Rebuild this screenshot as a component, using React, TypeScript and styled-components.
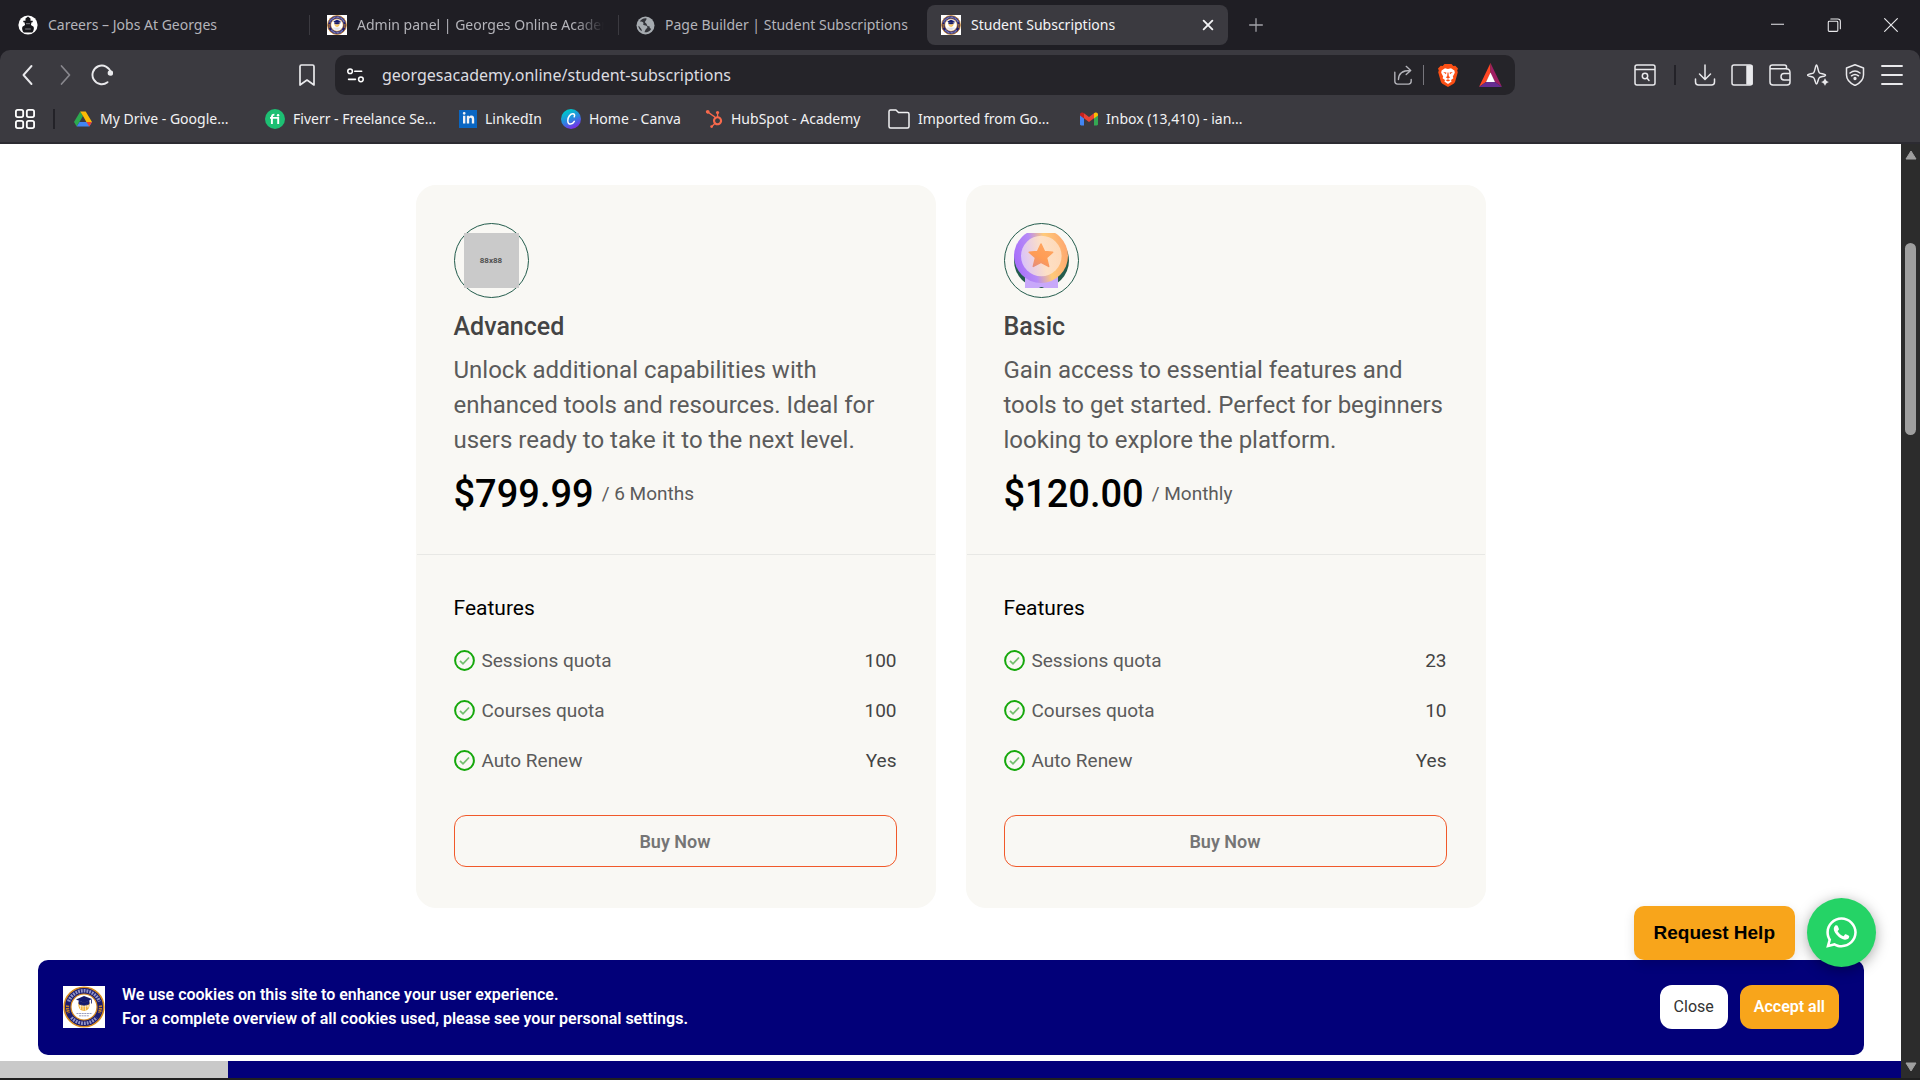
import React from 'react';
import styled, { createGlobalStyle } from 'styled-components';
import { FaHubspot, FaWhatsapp, FaLinkedinIn } from 'react-icons/fa6';

const ui = '"Noto Sans", "Open Sans", sans-serif';
const web = 'Roboto, "Liberation Sans", sans-serif';

const GlobalStyle = createGlobalStyle`
  * { box-sizing: border-box; }
  html, body, #root { height: 100%; }
  body { margin: 0; background: #202020; overflow: hidden; }
  button, input { font: inherit; color: inherit; border: 0; padding: 0; background: none; margin: 0; }
  h2, h3, p, ul, dl, dd { margin: 0; padding: 0; }
  svg { display: block; flex: none; }
`;

const Shell = styled.div`
  height: 100%;
  display: flex;
  flex-direction: column;
  padding-bottom: 2px;
`;

/* ---------- browser chrome ---------- */
const Chrome = styled.header`
  flex: none;
  background: #1f1e24;
  color: #fff;
  font: 14px/20px ${ui};
  border-bottom: 2px solid #2c2b31;
`;

const TabStrip = styled.div`
  display: flex;
  align-items: center;
  height: 50px;
  padding: 5px 0 5px 1px;
`;

const Tab = styled.button<{ $active?: boolean }>`
  display: flex;
  align-items: center;
  gap: 10px;
  width: ${(p) => (p.$active ? 301 : 308)}px;
  height: 40px;
  padding: 0 14px;
  padding-left: ${(p) => (p.$active ? 14 : 17)}px;
  border-radius: 8px;
  background: ${(p) => (p.$active ? '#3b3a40' : 'transparent')};
  color: ${(p) => (p.$active ? '#f4f4f6' : '#b4b4ba')};
  white-space: nowrap;
  text-align: left;
`;

const TabTitle = styled.span<{ $fade?: boolean }>`
  flex: 1;
  min-width: 0;
  overflow: hidden;
  ${(p) => p.$fade && 'mask-image: linear-gradient(to right, #000 88%, transparent);'}
`;

const Divider = styled.span<{ $tone: string; $w?: number }>`
  flex: none;
  width: ${(p) => p.$w ?? 1}px;
  height: 20px;
  background: ${(p) => p.$tone};
`;

const IconButton = styled.button<{ $w?: number; $tone?: string }>`
  display: flex;
  align-items: center;
  justify-content: center;
  flex: none;
  width: ${(p) => p.$w ?? 37}px;
  height: 36px;
  color: ${(p) => p.$tone ?? '#e9e9ec'};
`;

const Spacer = styled.span`
  flex: 1;
`;

const Panel = styled.div`
  background: #3b3a40;
  border-radius: 10px 10px 0 0;
  padding-top: 5px;
`;

const Toolbar = styled.div`
  display: flex;
  align-items: center;
  height: 40px;
  padding: 0 10px 0 9px;
`;

const NavGroup = styled.div`
  display: flex;
  flex: none;
  width: 279px;
`;

const AddressBar = styled.label`
  display: flex;
  align-items: center;
  flex: 0 1 1180px;
  height: 40px;
  margin-left: 10px;
  padding: 0 6px 0 12px;
  border-radius: 10px;
  background: #252429;
  font-size: 16px;
`;

const AddressField = styled.div`
  display: flex;
  flex: 1;
  margin-left: 18px;
`;

const Address = styled.input`
  width: 100%;
  outline: 0;
  color: #dcdce0;
`;

const Bookmarks = styled.nav`
  display: flex;
  align-items: center;
  height: 47px;
  padding-left: 15px;
`;

const Bookmark = styled.a<{ $w: number }>`
  display: flex;
  align-items: center;
  gap: 8px;
  width: ${(p) => p.$w}px;
  color: #f2f2f4;
  text-decoration: none;
  white-space: nowrap;
`;

const BookmarkLead = styled.div`
  display: flex;
  align-items: center;
  gap: 18px;
  width: 59px;
`;

const LinkedInTile = styled.span`
  display: grid;
  place-items: center;
  width: 18px;
  height: 18px;
  background: #0a66c2;
`;

/* ---------- page ---------- */
const Viewport = styled.div`
  flex: 1;
  min-height: 0;
  display: flex;
`;

const Page = styled.main`
  position: relative;
  flex: 1;
  min-width: 0;
  display: flex;
  flex-direction: column;
  background: #fff;
  font-family: ${web};
`;

const Plans = styled.section`
  flex: 1;
  display: flex;
  justify-content: center;
  align-items: flex-start;
  gap: 30px;
  padding-top: 41px;
`;

const Card = styled.article`
  width: 520px;
  border: 1px solid #f9f8f4;
  border-radius: 20px;
  background: #f9f8f4;
`;

const CardHead = styled.div`
  padding: 37px 38px 33px 37px;
  border-bottom: 1px solid #e8e8e5;
`;

const CardBody = styled.div`
  padding: 37px 38px 40px 37px;
`;

const Badge = styled.div`
  display: grid;
  place-items: center;
  width: 75px;
  height: 75px;
  border: 1px solid #235c4c;
  border-radius: 50%;
`;

const Placeholder = styled.span`
  display: grid;
  place-items: center;
  width: 55px;
  height: 55px;
  background: #cacaca;
  color: #505050;
  font: 700 8px/8px ${web};
`;

const PlanName = styled.h2`
  margin-top: 13px;
  color: #444;
  font-size: 25px;
  font-weight: 500;
  line-height: 32px;
`;

const Description = styled.p`
  margin-top: 10px;
  color: #5b5b5b;
  font-size: 24px;
  line-height: 35px;
`;

const PriceRow = styled.div`
  display: flex;
  align-items: center;
  gap: 8px;
  margin-top: 9px;
`;

const Price = styled.span`
  font-size: 38px;
  font-weight: 500;
  line-height: 54px;
  color: #000;
`;

const Period = styled.span`
  color: #5b5b5b;
  font-size: 19px;
  line-height: 28px;
`;

const FeaturesTitle = styled.h3`
  color: #000;
  font-size: 21px;
  font-weight: 400;
  line-height: 32px;
  margin-bottom: 11px;
`;

const FeatureList = styled.ul`
  list-style: none;
`;

const Feature = styled.li`
  display: flex;
  align-items: center;
  gap: 7px;
  height: 50px;
  color: #5b5b5b;
  font-size: 19px;
`;

const FeatureValue = styled.span`
  margin-left: auto;
  color: #444;
`;

const BuyButton = styled.button`
  width: 100%;
  height: 52px;
  margin-top: 30px;
  border: 1px solid #f1592a;
  border-radius: 12px;
  color: #757575;
  font-size: 18px;
  font-weight: 600;
`;

const FooterStrip = styled.div`
  display: flex;
  height: 17px;
  background: #020079;
`;

const LoadStatus = styled.span`
  width: 228px;
  background: #c9c9c9;
`;

const CookieBar = styled.aside`
  position: absolute;
  left: 38px;
  right: 37px;
  bottom: 23px;
  display: flex;
  align-items: center;
  gap: 12px;
  height: 95px;
  padding: 0 25px 2px;
  border-radius: 10px;
  background: #020079;
  color: #fff;
`;

const CookieText = styled.p`
  flex: 1;
  margin-left: 5px;
  font-size: 16px;
  font-weight: 600;
  line-height: 24px;
`;

const CookieButton = styled.button<{ $primary?: boolean }>`
  height: 44px;
  padding: 0 14px;
  border-radius: 12px;
  background: ${(p) => (p.$primary ? '#f8a51b' : '#fff')};
  color: ${(p) => (p.$primary ? '#fff' : '#333')};
  font-size: 16px;
  font-weight: ${(p) => (p.$primary ? 600 : 400)};
`;

const HelpDock = styled.div`
  position: absolute;
  right: 25px;
  bottom: 111px;
  display: flex;
  align-items: center;
  gap: 12px;
`;

const HelpButton = styled.button`
  height: 54px;
  padding: 0 20px;
  border-radius: 10px;
  background: #f8a51b;
  color: #000;
  font: 700 19px/24px "Liberation Sans", Arial, sans-serif;
  box-shadow: 0 4px 12px rgba(0, 0, 0, 0.12);
`;

const ChatButton = styled.button`
  display: grid;
  place-items: center;
  width: 69px;
  height: 69px;
  border-radius: 50%;
  background: #25d366;
  color: #fff;
  box-shadow: 0 3px 14px rgba(0, 0, 0, 0.35);
`;

const ScrollTrack = styled.div`
  display: flex;
  flex-direction: column;
  align-items: center;
  width: 19px;
  padding: 6px 0;
  background: #2c2c2c;
`;

const ScrollThumb = styled.div`
  width: 11px;
  height: 192px;
  margin-top: 83px;
  margin-bottom: auto;
  border-radius: 6px;
  background: #9f9f9f;
`;

/* ---------- drawings ---------- */
type LineProps = { size?: number; w?: number; children: React.ReactNode };
const Line = ({ size = 22, w = 1.5, children }: LineProps) => (
  <svg width={size} height={size} viewBox="0 0 22 22" fill="none" stroke="currentColor" strokeWidth={w} strokeLinecap="round" strokeLinejoin="round" aria-hidden="true">
    {children}
  </svg>
);

const Seal = ({ size }: { size: number }) => (
  <svg width={size} height={size} viewBox="0 0 42 42" aria-hidden="true">
    <rect width="42" height="42" fill="#fff" />
    <circle cx="21" cy="21" r="19.800" fill="#1b1c70" stroke="#d98a1c" strokeWidth="1.600" />
    <path d="M5.600 15.500a16.400 16.400 0 0 1 30.800 0M8.500 31.500a16.400 16.400 0 0 0 25 0" stroke="#b9bce4" strokeWidth="3.400" strokeDasharray="1.800 1" opacity=".75" fill="none" />
    <path d="M4.600 19.500a16.500 16.500 0 0 0 1 7.500M37.400 19.500a16.500 16.500 0 0 1-1 7.500" stroke="#c98224" strokeWidth="3.200" strokeDasharray="1.600 .7" fill="none" />
    <circle cx="21" cy="21" r="13" fill="#fff" stroke="#d98a1c" strokeWidth="1.200" />
    <path d="M15.500 16c-1 5 1.500 9 5.500 9s6.500-4 5.500-9z" fill="#f2b43c" />
    <path d="M17.500 17v6M20 17v7.500M22.500 17v7.500M25 17v5M16 20h10.500" stroke="#fff" strokeWidth=".6" />
    <path d="m13 13.500 8-3.500 8 3-7.500 4z" fill="#151a6d" />
    <path d="M16 15v3c3 1.500 7 1.500 10 0v-3.500l-4.500 2.500zM28.500 13.500v4" fill="#151a6d" stroke="#151a6d" strokeWidth=".8" />
    <path d="M13.500 27.500h15M16 29.800h10" stroke="#8f93b8" strokeWidth=".9" strokeDasharray="2 .6" />
  </svg>
);

const Crest = () => (
  <svg width="20" height="20" viewBox="0 0 20 20" aria-hidden="true">
    <circle cx="10" cy="10" r="9.600" fill="#fff" />
    <path d="M7.500 3.400 10 1.600l2.500 1.800v2.400h2.200v1.400H5.300V5.800h2.200z" fill="#17171b" />
    <path d="M6.400 7h7.200l-.7 3 2.700 1.800c.8 2-.2 4.700-1.400 5.600H5.800C4.600 16.500 3.600 13.800 4.400 11.800L7.100 10z" fill="#17171b" />
    <path d="M8 8.700h4M7.200 14h5.600" stroke="#8a8a90" strokeWidth=".9" />
  </svg>
);

const Globe = () => (
  <svg width="19" height="19" viewBox="0 0 19 19" aria-hidden="true">
    <circle cx="9.500" cy="9.500" r="9" fill="#a6abb0" />
    <path d="M10.500 2.200c-3-.4-5.500 1-6.700 3.300 1.800.1 3.200.2 3.600 1.300.4 1.200-.8 1.500.2 2.300 1 .7 2.800.2 3.600 1.300.6 1-.4 2-1.200 2.600-.8.700-.8 2-1.600 3.300 2.800.3 5.400-1.200 6.800-3.400-1.500-.6-1.700-1.800-1.700-2.600-1.400 0-2.700-.6-2.700-1.900 0-1.200-1.800-.9-1.800-2.300 0-1.500 1.700-1.500 1.500-3.900z" fill="#33343a" />
    <path d="M2.300 9.800c.2 2.300 1.600 4.300 3.400 5.500.2-1.300-.2-2-.8-2.700-.9-1-1.200-2.200-2.600-2.800z" fill="#33343a" />
  </svg>
);

const Drive = () => (
  <svg width="18" height="18" viewBox="0 0 18 18" aria-hidden="true">
    <path d="M6.200 1.500 0 12l2.700 4.600L9 6z" fill="#2da94f" />
    <path d="M6.200 1.500h5.500L18 12h-5.600L9 6z" fill="#fbbc05" />
    <path d="M2.700 16.600 5.500 12H18l-2.700 4.600z" fill="#4285f4" />
    <path d="M12.400 12H18l-2.700 4.600z" fill="#ea4335" />
  </svg>
);

const FiverrMark = () => (
  <svg width="20" height="20" viewBox="0 0 20 20" aria-hidden="true">
    <circle cx="10" cy="10" r="10" fill="#1dbf73" />
    <path d="M6.900 15V8c0-1.600.9-2.400 2.500-2.400M5 8.900h8.200V15" fill="none" stroke="#fff" strokeWidth="1.900" />
    <circle cx="13.100" cy="6.200" r="1.200" fill="#fff" />
  </svg>
);

const CanvaMark = () => (
  <svg width="20" height="20" viewBox="0 0 20 20" aria-hidden="true">
    <defs>
      <linearGradient id="canva" x1="0.300" y1="0.100" x2="0.700" y2="0.950">
        <stop offset="0" stopColor="#00c4cc" />
        <stop offset=".5" stopColor="#2b86e0" />
        <stop offset="1" stopColor="#7d2ae8" />
      </linearGradient>
    </defs>
    <circle cx="10" cy="10" r="10" fill="url(#canva)" />
    <path d="M13.200 7.800c.8-1.500.4-3-1.300-3C9 4.800 6.800 8.400 6.800 11.400c0 2.200 1 3.700 2.700 3.700 1.600 0 2.900-1 3.800-2.700" fill="none" stroke="#fff" strokeWidth="1.500" strokeLinecap="round" />
  </svg>
);

const GmailMark = () => (
  <svg width="18" height="18" viewBox="0 0 18 18" aria-hidden="true">
    <path d="M0 4.500v9.800c0 .7.500 1.200 1.200 1.200H4V8z" fill="#4285f4" />
    <path d="M18 4.500v9.800c0 .7-.5 1.200-1.200 1.200H14V8z" fill="#34a853" />
    <path d="M4 3.300v5L9 12l5-3.700v-5L9 7z" fill="#ea4335" />
    <path d="M0 4.500v1L4 8.400V3.300l-.8-.5C1.800 1.800 0 2.700 0 4.500z" fill="#c5221f" />
    <path d="M18 4.500v1l-4 2.900V3.300l.8-.5c1.400-1 3.200-.1 3.200 1.700z" fill="#fbbc04" />
  </svg>
);

const BraveMark = () => (
  <svg width="20" height="23" viewBox="0 0 20 23" aria-hidden="true">
    <path d="M6.500 0h7l1.800 2 2-.2L20 4.600l-.8 2 .6 1.700-2.600 9.200c-.3 1-.8 1.700-1.600 2.200L10 23l-5.600-3.300c-.8-.5-1.300-1.200-1.600-2.200L.2 8.300l.6-1.700-.8-2 2.700-2.800 2 .2z" fill="#fb4f14" />
    <path d="M10 5l3-.8 3.400 2.400.4 2.200-2 3.600.6 1.800-2.400 1.700.6 1.500L10 20l-3.600-2.600.6-1.500-2.400-1.700.6-1.800-2-3.600.4-2.200L7 4.200z" fill="#fff" />
    <path d="m5.200 8 3.200.5-.4 1.700zM14.800 8l-3.200.5.400 1.700zM9.500 8.500h1l.3 3.800 1.400 1-2.200 1.400-2.200-1.400 1.400-1zM7.600 16.300l2.400-1 2.400 1-2.400 1.300z" fill="#fb4f14" />
  </svg>
);

const Triangle = () => (
  <svg width="23" height="24" viewBox="0 0 23 24" aria-hidden="true">
    <path d="M11.500 0 0 24l7-5 4.500-8.500z" fill="#ff4724" />
    <path d="M11.500 0 23 24l-7-5-4.500-8.500z" fill="#9e1f63" />
    <path d="M0 24h23l-7-5H7z" fill="#662d91" />
    <path d="m11.500 9.500 4.500 9.500H7z" fill="#fff" />
  </svg>
);

const Medal = () => (
  <svg width="55" height="55" viewBox="0 0 55 55" aria-hidden="true">
    <defs>
      <linearGradient id="ring" x1="0" y1=".6" x2="1" y2=".4">
        <stop offset="0" stopColor="#a66dfb" />
        <stop offset=".35" stopColor="#b78cf6" />
        <stop offset=".62" stopColor="#ffcb7a" />
        <stop offset="1" stopColor="#fda66f" />
      </linearGradient>
      <linearGradient id="disc" x1="0" y1=".6" x2="1" y2=".4">
        <stop offset="0" stopColor="#d9c2fb" />
        <stop offset=".55" stopColor="#fde0c6" />
        <stop offset="1" stopColor="#fed9b8" />
      </linearGradient>
      <linearGradient id="star" x1="0" y1="1" x2=".6" y2="0">
        <stop offset="0" stopColor="#e08a85" />
        <stop offset=".5" stopColor="#ff9c55" />
        <stop offset="1" stopColor="#ffa45e" />
      </linearGradient>
    </defs>
    <circle cx="27.500" cy="27.500" r="27.500" fill="#235c4c" />
    <path d="M11 40h33v15H11z" fill="#c8a8fa" />
    <circle cx="27" cy="23" r="27" fill="url(#ring)" />
    <circle cx="27.300" cy="23" r="20.300" fill="url(#disc)" />
    <path d="m27 11 3.500 7.600 8.200.6-6.200 5.600 2.200 8.600L27 29.400l-7.700 4 2.200-8.600-6.300-5.600 8.300-.6z" fill="url(#star)" stroke="url(#star)" strokeWidth="1.500" strokeLinejoin="round" />
    <path d="M25 55q2.500-2 5 0z" fill="#235c4c" />
  </svg>
);

const Check = () => (
  <svg width="21" height="21" viewBox="0 0 21 21" fill="none" aria-hidden="true">
    <circle cx="10.500" cy="10.500" r="9.400" stroke="#16a80c" strokeWidth="2" />
    <path d="m6 10.800 3 3 6-6.300" stroke="#73bf6e" strokeWidth="1.800" />
  </svg>
);

type Plan = { name: string; text: string; price: string; period: string; art: React.ReactNode; features: [string, string][] };

const plans: Plan[] = [
  {
    name: 'Advanced',
    text: 'Unlock additional capabilities with enhanced tools and resources. Ideal for users ready to take it to the next level.',
    price: '$799.99',
    period: '/ 6 Months',
    art: <Placeholder>88x88</Placeholder>,
    features: [['Sessions quota', '100'], ['Courses quota', '100'], ['Auto Renew', 'Yes']],
  },
  {
    name: 'Basic',
    text: 'Gain access to essential features and tools to get started. Perfect for beginners looking to explore the platform.',
    price: '$120.00',
    period: '/ Monthly',
    art: <Medal />,
    features: [['Sessions quota', '23'], ['Courses quota', '10'], ['Auto Renew', 'Yes']],
  },
];

const PlanCard = ({ plan }: { plan: Plan }) => (
  <Card>
    <CardHead>
      <Badge>{plan.art}</Badge>
      <PlanName>{plan.name}</PlanName>
      <Description>{plan.text}</Description>
      <PriceRow>
        <Price>{plan.price}</Price>
        <Period>{plan.period}</Period>
      </PriceRow>
    </CardHead>
    <CardBody>
      <FeaturesTitle>Features</FeaturesTitle>
      <FeatureList>
        {plan.features.map(([label, value]) => (
          <Feature key={label}>
            <Check />
            <span>{label}</span>
            <FeatureValue>{value}</FeatureValue>
          </Feature>
        ))}
      </FeatureList>
      <BuyButton type="button">Buy Now</BuyButton>
    </CardBody>
  </Card>
);

const BrowserChrome = () => (
  <Chrome>
    <TabStrip>
      <Tab type="button"><Crest /><TabTitle>Careers – Jobs At Georges</TabTitle></Tab>
      <Divider $tone="#3b3a40" />
      <Tab type="button"><Seal size={20} /><TabTitle $fade>Admin panel | Georges Online Academy</TabTitle></Tab>
      <Divider $tone="#3b3a40" />
      <Tab type="button"><Globe /><TabTitle>Page Builder | Student Subscriptions</TabTitle></Tab>
      <Tab type="button" $active>
        <Seal size={20} />
        <TabTitle>Student Subscriptions</TabTitle>
        <Line size={12} w={3.4}><path d="m3 3 16 16M19 3 3 19" /></Line>
      </Tab>
      <IconButton aria-label="New tab" $w={55} $tone="#a2a2a8"><Line size={14} w={2}><path d="M11 1v20M1 11h20" /></Line></IconButton>
      <Spacer />
      <IconButton aria-label="Minimize" $w={56}><Line size={13} w={1.7}><path d="M0 9h22" /></Line></IconButton>
      <IconButton aria-label="Restore" $w={57}><Line size={14} w={1.7}><path d="M2 6.500q0-1.500 1.500-1.500h12q1.500 0 1.500 1.500v13q0 1.500-1.500 1.500h-12Q2 21 2 19.500zM6 1.500h11q4 0 4 4V17" /></Line></IconButton>
      <IconButton aria-label="Close window" $w={58}><Line size={14} w={1.8}><path d="m1 1 20 20M21 1 1 21" /></Line></IconButton>
    </TabStrip>
    <Panel>
      <Toolbar>
        <NavGroup>
          <IconButton aria-label="Back"><Line w={1.9}><path d="m14.500 2-8 9 8 9" /></Line></IconButton>
          <IconButton aria-label="Forward" $tone="#88878d"><Line w={1.700}><path d="m7.500 2 8 9-8 9" /></Line></IconButton>
          <IconButton aria-label="Reload">
            <Line w={1.9}><path d="M16.500 18.200A9.300 9.300 0 1 1 19.800 8.600" /><circle cx="19.400" cy="9" r="1.800" fill="currentColor" /></Line>
          </IconButton>
        </NavGroup>
        <IconButton aria-label="Bookmark this page"><Line w={1.700}><path d="M4 2.500Q4 1 5.500 1h11Q18 1 18 2.500V21l-7-5-7 5z" /></Line></IconButton>
        <AddressBar>
          <Line size={17} w={2}><circle cx="4" cy="5.500" r="3" /><path d="M10 5.500h9M2 16h9" /><circle cx="18" cy="16" r="3" /></Line>
          <AddressField><Address aria-label="Address" defaultValue="georgesacademy.online/student-subscriptions" /></AddressField>
          <IconButton aria-label="Share" $tone="#b4b4ba" $w={40}><Line size={20}><path d="M2 8v10q0 3 3 3h12q3 0 3-3v-2M6 16c0-6 3-10 13-10M14.500 1.500l5 4.500-5 4.500" /></Line></IconButton>
          <Divider $tone="#77767c" />
          <IconButton aria-label="Shields" $w={48}><BraveMark /></IconButton>
          <IconButton aria-label="Rewards"><Triangle /></IconButton>
        </AddressBar>
        <Spacer />
        <IconButton aria-label="Search tabs"><Line><path d="M1 3q0-2 2-2h16q2 0 2 2v16q0 2-2 2H3q-2 0-2-2zM1 5.500h20" /><circle cx="11" cy="12" r="2.700" /><path d="m13 14 2 2.500" /></Line></IconButton>
        <IconButton as="span" $w={23}><Divider $tone="#232228" $w={2} /></IconButton>
        <IconButton aria-label="Downloads"><Line><path d="M11 1v14M5.500 10l5.500 5.500 5.500-5.500M1.500 15v3q0 3 3 3h13q3 0 3-3v-3" /></Line></IconButton>
        <IconButton aria-label="Sidebar" $w={38}><Line><path d="M1 3q0-2 2-2h16q2 0 2 2v16q0 2-2 2H3q-2 0-2-2z" /><path d="M16 2h5v18h-5z" fill="currentColor" /></Line></IconButton>
        <IconButton aria-label="Wallet" $w={38}><Line><path d="M17.500 5V3q0-2-2-2H3.500Q1 1 1 3v15q0 3 3 3h14q3 0 3-3v-2M1 4.800h16q4 0 4 4M21 9.500h-6q-3 0-3 3.200t3 3.300h6z" /></Line></IconButton>
        <IconButton aria-label="Assistant"><Line><path d="M9.500 1c1.200 0 1.400 6.800 3 8 1.200.9 6 1 6 2.200s-4.800 1.300-6 2.300c-1.600 1.300-1.800 6.500-3 6.500s-1.400-5.200-3-6.500c-1.200-1-6-1.100-6-2.300s4.800-1.300 6-2.200c1.600-1.200 1.800-8 3-8z" /><path d="M18 14q.8 3 4 4-3.200 1-4 4-.8-3-4-4 3.200-1 4-4z" fill="currentColor" stroke="#3b3a40" strokeWidth="0.300" /></Line></IconButton>
        <IconButton aria-label="VPN"><Line><path d="M11 .8 19.500 4v7q0 6.500-8.500 10.500Q2.500 17.500 2.500 11V4zM6 9q5-4 10 0M7.500 11.800q3.500-2.800 7 0" /><circle cx="11" cy="14.500" r=".9" fill="currentColor" /></Line></IconButton>
        <IconButton aria-label="Menu"><Line w={1.900}><path d="M1 2h20M1 11h20M1 20h20" /></Line></IconButton>
      </Toolbar>
      <Bookmarks>
        <BookmarkLead>
          <Line size={20} w={2}><path d="M3 1h4q2 0 2 2v4q0 2-2 2H3q-2 0-2-2V3q0-2 2-2zM15 1h4q2 0 2 2v4q0 2-2 2h-4q-2 0-2-2V3q0-2 2-2zM3 13h4q2 0 2 2v4q0 2-2 2H3q-2 0-2-2v-4q0-2 2-2zM15 13h4q2 0 2 2v4q0 2-2 2h-4q-2 0-2-2v-4q0-2 2-2z" /></Line>
          <Divider $tone="#232228" $w={2} />
        </BookmarkLead>
        <Bookmark href="#" $w={191}><Drive />My Drive - Google...</Bookmark>
        <Bookmark href="#" $w={194}><FiverrMark />Fiverr - Freelance Se...</Bookmark>
        <Bookmark href="#" $w={102}><LinkedInTile><FaLinkedinIn size={13} /></LinkedInTile>LinkedIn</Bookmark>
        <Bookmark href="#" $w={144}><CanvaMark />Home - Canva</Bookmark>
        <Bookmark href="#" $w={183}><FaHubspot size={18} color="#f8694c" />HubSpot - Academy</Bookmark>
        <Bookmark href="#" $w={192}>
          <Line><path d="M1 3.500Q1 2 2.500 2H8l2.500 2.500h9Q21 4.500 21 6v12.500q0 1.500-1.500 1.500h-17Q1 20 1 18.500z" /></Line>
          Imported from Go...
        </Bookmark>
        <Bookmark href="#" $w={180}><GmailMark />Inbox (13,410) - ian...</Bookmark>
      </Bookmarks>
    </Panel>
  </Chrome>
);

export default function App() {
  return (
    <Shell>
      <GlobalStyle />
      <BrowserChrome />
      <Viewport>
        <Page>
          <Plans>
            {plans.map((plan) => <PlanCard key={plan.name} plan={plan} />)}
          </Plans>
          <FooterStrip><LoadStatus /></FooterStrip>
          <CookieBar>
            <Seal size={42} />
            <CookieText>
              We use cookies on this site to enhance your user experience.<br />
              For a complete overview of all cookies used, please see your personal settings.
            </CookieText>
            <CookieButton type="button">Close</CookieButton>
            <CookieButton type="button" $primary>Accept all</CookieButton>
          </CookieBar>
          <HelpDock>
            <HelpButton type="button">Request Help</HelpButton>
            <ChatButton type="button" aria-label="Chat on WhatsApp"><FaWhatsapp size={35} /></ChatButton>
          </HelpDock>
        </Page>
        <ScrollTrack>
          <svg width="12" height="10" viewBox="0 0 12 10"><path d="m6 1 5 8H1z" fill="#9f9f9f" stroke="#9f9f9f" strokeLinejoin="round" /></svg>
          <ScrollThumb />
          <svg width="12" height="10" viewBox="0 0 12 10"><path d="m6 9 5-8H1z" fill="#9f9f9f" stroke="#9f9f9f" strokeLinejoin="round" /></svg>
        </ScrollTrack>
      </Viewport>
    </Shell>
  );
}
